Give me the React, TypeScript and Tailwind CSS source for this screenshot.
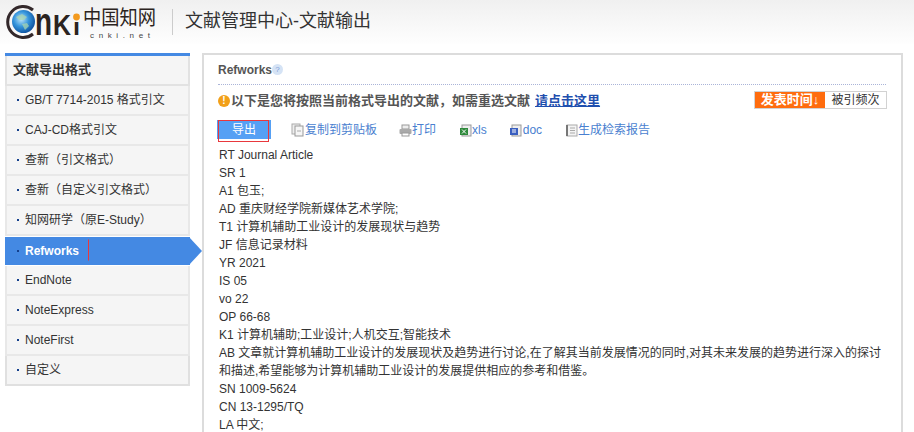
const font = { fontFamily: '"Liberation Sans","Noto Sans CJK SC",sans-serif' };
const menu = ["GB/T 7714-2015 格式引文","CAJ-CD格式引文","查新（引文格式）","查新（自定义引文格式）","知网研学（原E-Study）","Refworks","EndNote","NoteExpress","NoteFirst","自定义"];
const lines = ["RT Journal Article","SR 1","A1 包玉;","AD 重庆财经学院新媒体艺术学院;","T1 计算机辅助工业设计的发展现状与趋势","JF 信息记录材料","YR 2021","IS 05","vo 22","OP 66-68","K1 计算机辅助;工业设计;人机交互;智能技术","AB 文章就计算机辅助工业设计的发展现状及趋势进行讨论,在了解其当前发展情况的同时,对其未来发展的趋势进行深入的探讨","和描述,希望能够为计算机辅助工业设计的发展提供相应的参考和借鉴。","SN 1009-5624","CN 13-1295/TQ","LA 中文;"];

function Logo() {
  return (
    <svg width="158" height="44" viewBox="6 0 158 44" className="shrink-0">
      <defs>
        <radialGradient id="g" cx="40%" cy="40%" r="65%"><stop offset="0" stopColor="#bfe6f8"/><stop offset=".5" stopColor="#3595dc"/><stop offset="1" stopColor="#0d4f9c"/></radialGradient>
      </defs>
      <path d="M33 10 A15.500 15.500 0 1 0 33 34" fill="none" stroke="#33282a" strokeWidth="3"/>
      <circle cx="23.500" cy="21.500" r="11.500" fill="url(#g)"/>
      <path d="M16 17l6-3 5 3-3 3-5 0zM22 24l5-1 2 3-4 4z" fill="#a8d4b0" opacity=".75"/>
      <text x="35" y="35" fontFamily="Liberation Sans" fontWeight="700" fontSize="38" fill="#2b2320" textLength="17" lengthAdjust="spacingAndGlyphs">n</text>
      <text x="53" y="35" fontFamily="Liberation Sans" fontWeight="700" fontSize="29" fill="#2b2320" textLength="18" lengthAdjust="spacingAndGlyphs">K</text>
      <text x="73" y="35" fontFamily="Liberation Sans" fontWeight="700" fontSize="24" fill="#2b2320" textLength="7" lengthAdjust="spacingAndGlyphs">ı</text>
      <circle cx="76.500" cy="17" r="3.400" fill="#f39a1e"/>
      <text x="83" y="25" fontFamily="Noto Sans CJK SC" fontWeight="400" fontSize="20" fill="#2b2320" textLength="73" lengthAdjust="spacingAndGlyphs">中国知网</text>
      <text x="90" y="37.500" fontFamily="Liberation Sans" fontSize="8" fill="#444" textLength="60">cnki.net</text>
    </svg>
  );
}

function Tool({ icon, label, gap }: { icon: React.ReactNode; label: string; gap: string }) {
  return <span className={`flex items-center text-[#4a7fd0] text-xs ${gap}`}>{icon}<span>{label}</span></span>;
}

const Page = (
  <svg width="14" height="14" viewBox="0 0 14 14"><rect x="1" y="1" width="8" height="10" fill="#eee" stroke="#aaa"/><rect x="4" y="3" width="8" height="10" fill="#f6f6f6" stroke="#999"/><path d="M6 8h4" stroke="#aaa"/></svg>
);
const Printer = (
  <svg width="13" height="13" viewBox="0 0 13 13"><rect x="3" y="1" width="7" height="4" fill="#eee" stroke="#999"/><rect x="0.500" y="5" width="12" height="5" rx="1" fill="#aaa"/><rect x="3" y="9" width="7" height="3" fill="#fff" stroke="#999"/></svg>
);
const Xls = (
  <svg width="12" height="13" viewBox="0 0 12 13"><rect x="2" y="1" width="9" height="11" fill="#eee" stroke="#999"/><rect x="0" y="4" width="8" height="7" fill="#2f8a3c"/><path d="M2 5.500l4 4M6 5.500l-4 4" stroke="#fff"/></svg>
);
const Doc = (
  <svg width="13" height="13" viewBox="0 0 13 13"><rect x="2" y="1" width="9" height="11" fill="#eee" stroke="#999"/><rect x="0" y="4" width="8" height="7" fill="#3a5fc0"/><path d="M2 6h4M2 8h4" stroke="#fff"/></svg>
);
const Report = (
  <svg width="12" height="13" viewBox="0 0 12 13"><rect x="1" y="1" width="10" height="11" fill="#f4f4f4" stroke="#aaa"/><path d="M1 1v11" stroke="#777" strokeWidth="2"/><path d="M4 4h5M4 6.500h5M4 9h5" stroke="#aaa"/></svg>
);

export default function App() {
  return (
    <div style={font} className="w-[914px] h-[432px] overflow-hidden bg-white text-[#333] text-xs">
      <header className="h-[44px] flex items-center pl-[6px] bg-gradient-to-b from-[#f0f0f0] to-[#fefefe]">
        <Logo />
        <div className="w-px h-[26px] bg-[#ccc] ml-[8px]" />
        <div className="ml-[12px] -mt-[2px] text-[18px] text-[#333] leading-none">文献管理中心-文献输出</div>
      </header>
      <div className="flex items-start mt-[9px] pl-[5px]">
        <aside className="w-[185px] shrink-0 border-t-[3px] border-[#4489e3]">
          <div className="h-[30px] leading-[27px] pl-[6px] text-[13px] font-bold bg-[#f5f5f5] border-x-2 border-b-2 border-[#e2e2e2] text-[#333]">文献导出格式</div>
          <ul>
            {menu.map((m, i) => m === "Refworks" ? (
              <li key={m} className="relative h-[30px] py-px">
                <div className="h-[28px] flex items-center pl-[12px] bg-[#4489e3] text-white font-bold">
                  <span className="w-[2px] h-[2px] bg-[#14408c] mr-[6px]" />
                  <span>{m}</span>
                </div>
                <span className="absolute left-[6px] top-[3px] w-[78px] h-[22px] border border-[#e8383d] border-l-[#4489e3] border-y-[#4489e3]" />
                <span className="absolute left-[184px] top-px border-y-[14px] border-y-transparent border-l-[13px] border-l-[#4489e3]" />
              </li>
            ) : (
              <li key={m} className={i === menu.length - 1 ? "h-[30px] flex items-center pl-[10px] bg-[#f5f5f5] border-2 border-t-0 border-[#e0e0e0] text-[#333]" : "h-[30px] flex items-center pl-[10px] bg-[#f5f5f5] border-2 border-t-0 border-[#e8e8e8] text-[#333]"}>
                <span className="w-[2px] h-[2px] bg-[#14408c] mr-[6px]" />
                <span>{m}</span>
              </li>
            ))}
          </ul>
        </aside>
        <main className="ml-[12px] w-[701px] h-[379px] border-2 border-b-0 border-[#dcdcdc] px-[15px]">
          <div className="h-[30px] -ml-px flex items-center border-b border-dotted border-[#aab4d8] font-bold text-[#555] text-xs">
            Refworks
            <span className="w-[11px] h-[11px] rounded-full bg-[#d5e3f5] text-[#7a9cd8] text-[8px] leading-[11px] text-center font-normal">?</span>
          </div>
          <div className="flex items-center h-[28px] mt-[2px]">
            <span className="w-[12px] h-[12px] -ml-px rounded-full bg-[#f2a019] text-white text-[10px] font-bold leading-[12px] text-center">!</span>
            <span className="ml-px text-[13px] font-bold text-[#555]">以下是您将按照当前格式导出的文献，如需重选文献</span>
            <a className="ml-[5px] text-[13px] font-bold text-[#1f4fae] underline">请点击这里</a>
            <div className="ml-auto mr-[-1px] flex h-[18px] border border-[#d2d2d2] -mt-[3px]">
              <span className="w-[70px] bg-[#ff6c0e] text-white font-bold text-[13px] leading-[16px] text-center">发表时间↓</span>
              <span className="w-[61px] text-center text-[#333] leading-[16px]">被引频次</span>
            </div>
          </div>
          <div className="flex items-center h-[22px] mt-[4px] -ml-[2px]">
            <button className="relative w-[54px] h-[19px] bg-[#55a0f4] text-white text-xs -mt-[1px]">
              导出
              <span className="absolute left-[1px] top-0 w-[51px] h-[22px] border border-[#e8383d]" />
            </button>
            <Tool gap="ml-[20px]" icon={Page} label="复制到剪贴板" />
            <Tool gap="ml-[22px]" icon={Printer} label="打印" />
            <Tool gap="ml-[24px]" icon={Xls} label="xls" />
            <Tool gap="ml-[23px]" icon={Doc} label="doc" />
            <Tool gap="ml-[24px]" icon={Report} label="生成检索报告" />
          </div>
          <div className="mt-[5px] leading-[18px] text-[#333] text-xs">
            {lines.map((l) => <div key={l}>{l}</div>)}
          </div>
        </main>
      </div>
    </div>
  );
}
